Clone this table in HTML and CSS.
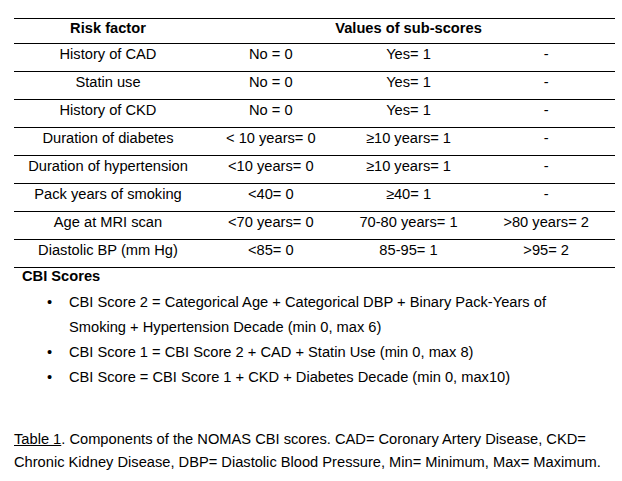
FILE: index.html
```html
<!DOCTYPE html>
<html lang="en">
<head>
<meta charset="utf-8">
<title>NOMAS CBI scores</title>
<link rel="stylesheet" href="styles.css">
</head>
<body>
<div class="doc">
  <table class="scores">
    <thead>
      <tr>
        <th class="c1">Risk factor</th>
        <th colspan="3">Values of sub-scores</th>
      </tr>
    </thead>
    <tbody>
      <tr><td class="c1">History of CAD</td><td class="c2">No = 0</td><td class="c3">Yes= 1</td><td class="c4">-</td></tr>
      <tr><td class="c1">Statin use</td><td class="c2">No = 0</td><td class="c3">Yes= 1</td><td class="c4">-</td></tr>
      <tr><td class="c1">History of CKD</td><td class="c2">No = 0</td><td class="c3">Yes= 1</td><td class="c4">-</td></tr>
      <tr><td class="c1">Duration of diabetes</td><td class="c2">&lt; 10 years= 0</td><td class="c3">&ge;10 years= 1</td><td class="c4">-</td></tr>
      <tr><td class="c1">Duration of hypertension</td><td class="c2">&lt;10 years= 0</td><td class="c3">&ge;10 years= 1</td><td class="c4">-</td></tr>
      <tr><td class="c1">Pack years of smoking</td><td class="c2">&lt;40= 0</td><td class="c3">&ge;40= 1</td><td class="c4">-</td></tr>
      <tr><td class="c1">Age at MRI scan</td><td class="c2">&lt;70 years= 0</td><td class="c3">70-80 years= 1</td><td class="c4">&gt;80 years= 2</td></tr>
      <tr><td class="c1">Diastolic BP (mm Hg)</td><td class="c2">&lt;85= 0</td><td class="c3">85-95= 1</td><td class="c4">&gt;95= 2</td></tr>
    </tbody>
  </table>
  <div class="cbi">
    <div class="cbi-title">CBI Scores</div>
    <ul class="cbi-list">
      <li><span class="bullet">•</span><span>CBI Score 2 = Categorical Age + Categorical DBP + Binary Pack-Years of Smoking + Hypertension Decade (min 0, max 6)</span></li>
      <li><span class="bullet">•</span><span>CBI Score 1 = CBI Score 2 + CAD + Statin Use (min 0, max 8)</span></li>
      <li><span class="bullet">•</span><span>CBI Score = CBI Score 1 + CKD + Diabetes Decade (min 0, max10)</span></li>
    </ul>
  </div>
  <p class="caption"><span class="ref">Table 1</span>. Components of the NOMAS CBI scores. CAD= Coronary Artery Disease, CKD= Chronic Kidney Disease, DBP= Diastolic Blood Pressure, Min= Minimum, Max= Maximum.</p>
</div>
</body>
</html>
```

FILE: styles.css
```css
html, body {
  margin: 0;
  padding: 0;
  background: #ffffff;
}

body {
  font-family: "Liberation Sans", Arial, sans-serif;
  font-size: 14.67px;
  color: #000000;
}

.doc {
  width: 601px;
  padding: 18px 0 0 14px;
}

.scores {
  width: 601px;
  border-collapse: separate;
  border-spacing: 0;
  table-layout: fixed;
}

.scores th,
.scores td {
  text-align: center;
  vertical-align: top;
  line-height: 17px;
  white-space: nowrap;
  border-bottom: 1px solid #000000;
  padding-left: 0;
  padding-right: 0;
}

.scores th {
  font-weight: bold;
  border-top: 1px solid #000000;
  padding-top: 1px;
  padding-bottom: 6px;
}

.scores td {
  padding-top: 2px;
  padding-bottom: 8px;
}

.scores .c1 { width: 188px; }
.scores .c2 { width: 150px; }
.scores .c3 { width: 126px; }
.scores .c4 { width: 137px; }

.cbi {
  padding: 0 8px 0 8px;
}

.cbi-title {
  font-weight: bold;
  line-height: 17px;
  margin-bottom: 5px;
}

.cbi-list {
  list-style: none;
  margin: 0;
  padding: 0 0 0 25px;
}

.cbi-list li {
  display: grid;
  grid-template-columns: 22px 1fr;
  line-height: 25px;
}

.bullet {
  display: block;
}

.caption {
  margin: 38px 0 0 0;
  line-height: 23px;
}

.caption .ref {
  text-decoration: underline;
}
```
